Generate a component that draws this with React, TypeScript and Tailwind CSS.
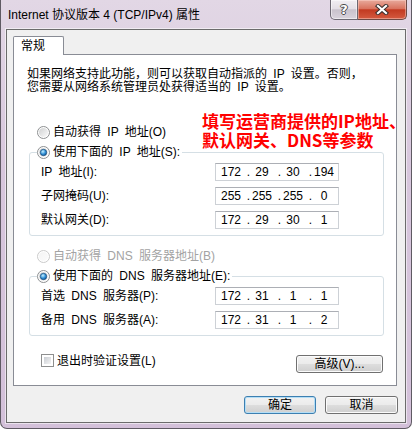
import { useId } from "react";

const UI = "font-['Liberation_Sans','Noto_Sans_CJK_SC',sans-serif]";
const BTN_BG = "bg-[linear-gradient(180deg,#f2f2f2_0%,#ebebeb_48%,#dddddd_52%,#cfcfcf_100%)]";

function Radio({ checked = false, disabled = false }: { checked?: boolean; disabled?: boolean }) {
  const id = useId().replace(/:/g, "");
  return (
    <svg width="13" height="13" viewBox="0 0 13 13" className="shrink-0">
      <defs>
        <linearGradient id={`${id}f`} x1="0" y1="0" x2="1" y2="1">
          <stop offset="0" stopColor={disabled ? "#f4f4f4" : "#cfd0d1"} />
          <stop offset="1" stopColor={disabled ? "#fbfbfb" : "#fbfbfb"} />
        </linearGradient>
        <radialGradient id={`${id}d`} cx="0.4" cy="0.35" r="0.75">
          <stop offset="0" stopColor="#c4efff" />
          <stop offset="0.55" stopColor="#2f8fd6" />
          <stop offset="1" stopColor="#0f4b87" />
        </radialGradient>
      </defs>
      <circle cx="6.5" cy="6.5" r="6" fill="#fff" stroke={disabled ? "#cacaca" : "#8d8f91"} />
      <circle cx="6.5" cy="6.5" r="4.6" fill={`url(#${id}f)`} />
      {checked && <circle cx="6.5" cy="6.5" r="3.2" fill={`url(#${id}d)`} stroke="#1a4c7a" strokeWidth="0.7" />}
    </svg>
  );
}

function Checkbox() {
  return (
    <div className="h-[13px] w-[13px] shrink-0 border border-[#8e8f8f] bg-white p-[2px]">
      <div className="h-full w-full bg-[linear-gradient(135deg,#c9cdd3,#f5f5f5)]" />
    </div>
  );
}

function WinButton({ label, className, primary }: { label: string; className: string; primary?: boolean }) {
  return (
    <div
      className={`flex h-[18px] items-center justify-center rounded-[3px] border ${BTN_BG} ${
        primary ? "border-[#3c7fb1] shadow-[inset_0_0_0_1px_#b4def6]" : "border-[#707070] shadow-[inset_0_0_0_1px_#fbfbfb]"
      } ${className}`}
    >
      {label}
    </div>
  );
}

function IpBox({ parts }: { parts: string[] }) {
  return (
    <div className="flex h-[18px] w-[124px] items-center border border-[#cdd1d6] border-t-[#acafb5] bg-white pl-[3px] font-['Liberation_Sans',sans-serif] text-[12px] leading-[16px] text-black">
      {parts.map((p, i) => (
        <div key={i} className="flex">
          <span className="w-[24px] text-center">{p}</span>
          {i < 3 && <span className="w-[7px] text-right">.</span>}
        </div>
      ))}
    </div>
  );
}

function IpRow({ label, parts }: { label: string; parts: string[] }) {
  return (
    <div className="flex h-[18px] items-center">
      <span className="w-[174px]">{label}</span>
      <IpBox parts={parts} />
    </div>
  );
}

function Group({ legend, children }: { legend: string; children: React.ReactNode }) {
  return (
    <fieldset className="ml-[15px] mr-[12px] mt-[4px] rounded-[3px] border border-[#d5dfe5]">
      <legend className="ml-[7px] pr-[2px]">
        <div className="flex h-[16px] items-center gap-[3px]">
          <Radio checked />
          <span>{legend}</span>
        </div>
      </legend>
      <div className="flex flex-col gap-[6px] pb-[6px] pl-[11px] pt-[3px]">{children}</div>
    </fieldset>
  );
}

export default function App() {
  return (
    <div className={`h-[429px] w-[412px] overflow-hidden bg-white ${UI}`}>
      <div className="flex h-full flex-col rounded-b-[7px] border-x border-b border-[#5f5a63] bg-[linear-gradient(180deg,#e2d7e5_0%,#d7c6dc_40%,#d3c0d9_100%)]">
        {/* title bar */}
        <div className="flex h-[29px] items-start justify-between">
          <div className="pl-[7px] pt-[7px] text-[12px] leading-[16px] text-black">
            Internet 协议版本 4 (TCP/IPv4) 属性
          </div>
          <div className="mr-[4px] flex h-[20px]">
            <div className="flex w-[28px] items-center justify-center rounded-bl-[5px] border border-t-0 border-[#6d6872] bg-[linear-gradient(180deg,#f1eef2_0%,#e4dfe6_45%,#c9c2cc_52%,#d9d3dc_100%)] shadow-[inset_0_0_0_1px_rgba(255,255,255,0.5)]">
              <span className="font-['DejaVu_Sans',sans-serif] text-[13px] font-bold leading-none text-white [text-shadow:1px_0_0_#4a4a4a,-1px_0_0_#4a4a4a,0_1px_0_#4a4a4a,0_-1px_0_#4a4a4a]">
                ?
              </span>
            </div>
            <div className="flex w-[49px] items-center justify-center rounded-br-[5px] border border-l-0 border-t-0 border-[#6d4a45] bg-[linear-gradient(180deg,#e8aa9c_0%,#d9735f_45%,#c23a21_52%,#d45a40_100%)] shadow-[inset_0_0_0_1px_rgba(255,220,210,0.45)]">
              <svg width="14" height="11" viewBox="0 0 14 11">
                <path d="M3 2 L11 9 M11 2 L3 9" stroke="#3a2f2e" strokeWidth="4.2" strokeLinecap="square" />
                <path d="M3 2 L11 9 M11 2 L3 9" stroke="#ffffff" strokeWidth="2.2" strokeLinecap="square" />
              </svg>
            </div>
          </div>
        </div>

        {/* client area */}
        <div className="mx-[5px] h-[394px] border border-[#6b6b6b] bg-[#f0f0f0] shadow-[0_0_0_1px_rgba(255,255,255,0.55)] text-[12px] leading-[16px] text-black">
          <div className="pl-[6px] pt-[6px]">
            <div className="relative z-10 -mb-[1px] flex h-[19px] w-[51px] items-center rounded-t-[2px] border-x border-t border-[#898c95] bg-white pl-[7px]">
              常规
            </div>
            <div className="relative h-[332px] w-[384px] border border-[#898c95] bg-white [word-spacing:3px]">
              <div className="pl-[13px] pt-[13px] leading-[13px]">
                <div>如果网络支持此功能，则可以获取自动指派的 IP 设置。否则，</div>
                <div>您需要从网络系统管理员处获得适当的 IP 设置。</div>
              </div>

              <div className="ml-[23px] mt-[30px] flex h-[16px] items-center gap-[3px]">
                <Radio />
                <span>自动获得 IP 地址(O)</span>
              </div>

              <Group legend="使用下面的 IP 地址(S):">
                <IpRow label="IP 地址(I):" parts={["172", "29", "30", "194"]} />
                <IpRow label="子网掩码(U):" parts={["255", "255", "255", "0"]} />
                <IpRow label="默认网关(D):" parts={["172", "29", "30", "1"]} />
              </Group>

              <div className="ml-[23px] mt-[12px] flex h-[16px] items-center gap-[3px] text-[#a3a3a3]">
                <Radio disabled />
                <span>自动获得 DNS 服务器地址(B)</span>
              </div>

              <Group legend="使用下面的 DNS 服务器地址(E):">
                <IpRow label="首选 DNS 服务器(P):" parts={["172", "31", "1", "1"]} />
                <IpRow label="备用 DNS 服务器(A):" parts={["172", "31", "1", "2"]} />
              </Group>

              <div className="mt-[18px] flex items-start justify-between">
                <div className="ml-[27px] flex h-[13px] items-center gap-[3px]">
                  <Checkbox />
                  <span>退出时验证设置(L)</span>
                </div>
                <WinButton label="高级(V)..." className="mr-[13px] mt-[1px] w-[87px]" />
              </div>

              {/* annotation written over the screenshot */}
              <div className="absolute left-[188px] top-[56px] whitespace-nowrap font-['Noto_Sans_CJK_SC',sans-serif] text-[17px] font-bold leading-[19px] text-[#ff0000] [word-spacing:0px]">
                <div>填写运营商提供的IP地址、</div>
                <div>默认网关、DNS等参数</div>
              </div>
            </div>
          </div>

          <div className="mt-[10px] flex justify-end gap-[9px] pr-[7px]">
            <WinButton label="确定" className="w-[72px]" primary />
            <WinButton label="取消" className="w-[73px]" />
          </div>
        </div>
      </div>
    </div>
  );
}
